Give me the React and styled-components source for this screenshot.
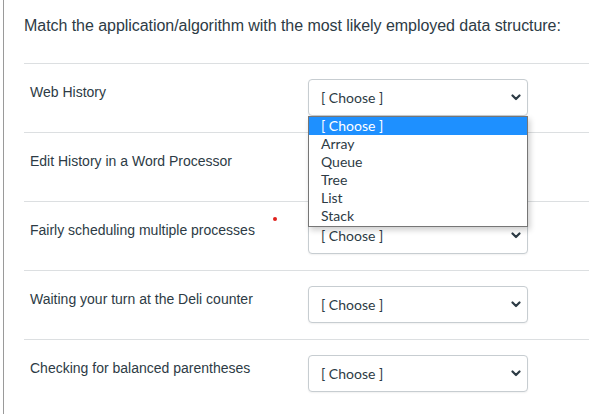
import React from 'react'
import styled, { createGlobalStyle } from 'styled-components'

const GlobalStyle = createGlobalStyle`
    html, body {
        margin: 0;
        padding: 0;
        background: #fff;
    }
    body {
        font-family: "Liberation Sans", Arial, sans-serif;
        color: #2d3b45;
    }
`

const options = ['[ Choose ]', 'Array', 'Queue', 'Tree', 'List', 'Stack']

const questions = [
    'Web History',
    'Edit History in a Word Processor',
    'Fairly scheduling multiple processes',
    'Waiting your turn at the Deli counter',
    'Checking for balanced parentheses',
]

function Chevron() {
    return (
        <svg width="10" height="7" viewBox="0 0 10 7">
            <path d="M1.5 1.5 L5 5 L8.5 1.5" fill="none" stroke="#2d3b45" strokeWidth="2.2" strokeLinecap="round" strokeLinejoin="round" />
        </svg>
    )
}

function App() {
    return (
        <>
            <GlobalStyle />
            <Page>
                <Title>Match the application/algorithm with the most likely employed data structure:</Title>
                <List>
                    {questions.map((q, i) => (
                        <Row key={q}>
                            <Label>{q}</Label>
                            <SelectBox>
                                <span>[ Choose ]</span>
                                <Chevron />
                                {i === 0 && (
                                    <Dropdown>
                                        {options.map((o, j) => (
                                            <Option key={o} selected={j === 0}>{o}</Option>
                                        ))}
                                    </Dropdown>
                                )}
                            </SelectBox>
                            {i === 2 && <Dot />}
                        </Row>
                    ))}
                </List>
            </Page>
        </>
    )
}

export default App

const Page = styled.div`
    margin-left: 3px;
    border-left: 1px solid #9a9a9a;
    min-height: 414px;
    box-sizing: border-box;
    padding: 15px 0 0 20px;
`

const Title = styled.div`
    font-size: 16px;
    line-height: 22px;
    color: #2d3b45;
    margin-bottom: 26px;
    letter-spacing: -0.05px;
`

const List = styled.div`
    display: flex;
    flex-direction: column;
`

const Row = styled.div`
    position: relative;
    display: grid;
    grid-template-columns: 284px 220px;
    height: 69px;
    box-sizing: border-box;
    border-top: 1px solid #dcdfe1;
`

const Label = styled.div`
    padding: 18px 0 0 6px;
    font-size: 14px;
    line-height: 20px;
    color: #2d3b45;
`

const SelectBox = styled.div`
    position: relative;
    margin-top: 15px;
    height: 37px;
    box-sizing: border-box;
    border: 1px solid #c7cdd1;
    border-radius: 4px;
    background: #fff;
    display: flex;
    align-items: center;
    justify-content: space-between;
    padding: 0 6px 0 12px;
    font-family: Lato, "Liberation Sans", sans-serif;
    font-size: 14px;
    color: #2d3b45;
    box-shadow: 0 1px 2px rgba(0, 0, 0, 0.06);
`

const Dropdown = styled.div`
    position: absolute;
    top: 36px;
    left: -1px;
    width: 220px;
    box-sizing: border-box;
    border: 1px solid #767676;
    background: #fff;
    z-index: 5;
    box-shadow: 2px 3px 6px rgba(0, 0, 0, 0.2);
    padding-bottom: 1px;
`

const Option = styled.div`
    height: 18px;
    line-height: 18px;
    padding-left: 12px;
    font-family: Lato, "Liberation Sans", sans-serif;
    font-size: 14px;
    color: ${p => (p.selected ? '#fff' : '#2d3b45')};
    background: ${p => (p.selected ? '#1e90ff' : '#fff')};
`

const Dot = styled.div`
    position: absolute;
    left: 249px;
    top: 15px;
    width: 4px;
    height: 4px;
    border-radius: 50%;
    background: #e0201c;
`
